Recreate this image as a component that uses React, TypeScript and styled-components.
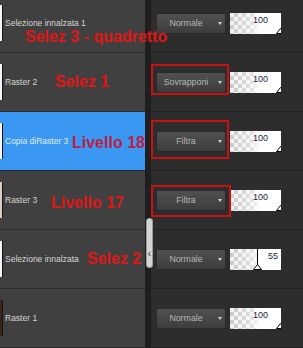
import React from 'react';
import styled, { createGlobalStyle } from 'styled-components';

type Note = { text: string; left: number; top: number };
type Mark = { top: number; height: number; width: number };

type Layer = {
  name: string;
  thumb: string;
  mode: string;
  opacity: number;
  valuePad: number;
  selected?: boolean;
  note?: Note;
  mark?: Mark;
};

const layers: Layer[] = [
  {
    name: 'Selezione innalzata 1',
    thumb: '#f4f4f4',
    mode: 'Normale',
    opacity: 100,
    valuePad: 13,
    note: { text: 'Selez 3 - quadretto', left: 25, top: 35 },
  },
  {
    name: 'Raster 2',
    thumb: '#f4f4f4',
    mode: 'Sovrapponi',
    opacity: 100,
    valuePad: 13,
    note: { text: 'Selez 1', left: 55, top: 21 },
    mark: { top: 11, height: 31, width: 78 },
  },
  {
    name: 'Copia diRaster 3',
    thumb: '#f7f7f7',
    mode: 'Filtra',
    opacity: 100,
    valuePad: 13,
    selected: true,
    note: { text: 'Livello 18', left: 72, top: 23 },
    mark: { top: 8, height: 39, width: 78 },
  },
  {
    name: 'Raster 3',
    thumb: '#d9cdc4',
    mode: 'Filtra',
    opacity: 100,
    valuePad: 13,
    note: { text: 'Livello 17', left: 51, top: 24 },
    mark: { top: 14, height: 32, width: 80 },
  },
  {
    name: 'Selezione innalzata',
    thumb: '#f4f4f4',
    mode: 'Normale',
    opacity: 55,
    valuePad: 3,
    note: { text: 'Selez 2', left: 87, top: 21 },
  },
  {
    name: 'Raster 1',
    thumb: '#3a2418',
    mode: 'Normale',
    opacity: 100,
    valuePad: 13,
  },
];

const App = () => {
  return (
    <>
      <GlobalStyle />
      <Panel>
        {layers.map((layer) => (
          <Row key={layer.name}>
            <NameCell $selected={layer.selected}>
              <Thumb $color={layer.thumb} />
              <LayerName $selected={layer.selected}>{layer.name}</LayerName>
            </NameCell>
            <Divider />
            <ModeCell>
              <Dropdown>
                <DropdownLabel>{layer.mode}</DropdownLabel>
                <Caret />
              </Dropdown>
              <Opacity>
                <OpacityFill style={{ width: `${layer.opacity}%` }} $full={layer.opacity >= 100} />
                <OpacityValue $pad={layer.valuePad}>{layer.opacity}</OpacityValue>
                <Marker style={{ left: `${layer.opacity}%` }} width="9" height="6" viewBox="0 0 9 6">
                  <path d="M0.5 5.5 L4.5 0.5 L8.5 5.5 Z" fill="#fff" stroke="#000" strokeWidth="1" />
                </Marker>
              </Opacity>
              {layer.mark && (
                <Highlight $top={layer.mark.top} $height={layer.mark.height} $width={layer.mark.width} />
              )}
            </ModeCell>
            {layer.note && (
              <Annotation $left={layer.note.left} $top={layer.note.top} $onBlue={layer.selected}>
                {layer.note.text}
              </Annotation>
            )}
          </Row>
        ))}
        <SplitHandle>‹</SplitHandle>
      </Panel>
    </>
  );
};

const GlobalStyle = createGlobalStyle`
  html, body {
    margin: 0;
    padding: 0;
    background: #2d2d2d;
    overflow: hidden;
  }
  body {
    font-family: "Liberation Sans", Arial, sans-serif;
  }
`;

const Panel = styled.div`
  position: relative;
  width: 303px;
  margin-top: -6px;
`;

const Row = styled.div`
  position: relative;
  display: grid;
  grid-template-columns: 145px 6px 1fr;
  height: 59px;
`;

const NameCell = styled.div<{ $selected?: boolean }>`
  display: flex;
  align-items: center;
  gap: 1px;
  background: ${(p) => (p.$selected ? '#3a98f3' : '#404040')};
  border-bottom: 1px solid ${(p) => (p.$selected ? '#1b2c40' : '#2a2a2a')};
  overflow: hidden;
`;

const Thumb = styled.div<{ $color: string }>`
  flex: none;
  width: 2px;
  height: 36px;
  background: ${(p) => p.$color};
  border-right: 1px solid #151515;
`;

const LayerName = styled.span<{ $selected?: boolean }>`
  font-size: 8.5px;
  color: ${(p) => (p.$selected ? '#e2ecf8' : '#d4d4d4')};
  white-space: nowrap;
  margin-left: 1px;
`;

const Divider = styled.div`
  background: #1f1f1f;
`;

const ModeCell = styled.div`
  position: relative;
  display: flex;
  align-items: center;
  gap: 4px;
  padding-left: 5px;
  background: #2d2d2d;
  border-bottom: 1px solid #222;
`;

const Dropdown = styled.div`
  box-sizing: border-box;
  display: flex;
  align-items: center;
  width: 70px;
  height: 21px;
  border: 1px solid #2a2a2a;
  border-radius: 2px;
  background: linear-gradient(#505050, #3d3d3d);
`;

const DropdownLabel = styled.span`
  width: 58px;
  text-align: center;
  font-size: 8.8px;
  color: #b6b6b6;
`;

const Caret = styled.span`
  margin-left: 3px;
  width: 0;
  height: 0;
  border-left: 2.5px solid transparent;
  border-right: 2.5px solid transparent;
  border-top: 3px solid #d0d0d0;
`;

const Opacity = styled.div`
  position: relative;
  width: 51px;
  height: 21px;
  background: #fff;
  overflow: hidden;
`;

const OpacityFill = styled.div<{ $full: boolean }>`
  position: absolute;
  left: 0;
  top: 0;
  bottom: 0;
  box-sizing: border-box;
  border-right: ${(p) => (p.$full ? 'none' : '1px solid #000')};
  background:
    linear-gradient(to right, rgba(255, 255, 255, 0) 0px, rgba(255, 255, 255, 0.45) 22px, #fff 30px),
    linear-gradient(45deg, #c9c9c9 25%, transparent 25%, transparent 75%, #c9c9c9 75%),
    linear-gradient(45deg, #c9c9c9 25%, transparent 25%, transparent 75%, #c9c9c9 75%),
    #f2f2f2;
  background-size: 100% 100%, 8px 8px, 8px 8px, auto;
  background-position: 0 0, 0 0, 4px 4px, 0 0;
`;

const OpacityValue = styled.span<{ $pad: number }>`
  position: absolute;
  top: 2px;
  right: ${(p) => p.$pad}px;
  font-size: 9px;
  line-height: 10px;
  color: #1c2438;
`;

const Marker = styled.svg`
  position: absolute;
  bottom: 0;
  margin-left: -5px;
`;

const Highlight = styled.div<{ $top: number; $height: number; $width: number }>`
  position: absolute;
  left: 0;
  top: ${(p) => p.$top}px;
  width: ${(p) => p.$width}px;
  height: ${(p) => p.$height}px;
  box-sizing: border-box;
  border: 2px solid #c81212;
  pointer-events: none;
`;

const Annotation = styled.span<{ $left: number; $top: number; $onBlue?: boolean }>`
  position: absolute;
  left: ${(p) => p.$left}px;
  top: ${(p) => p.$top}px;
  font-size: 16px;
  line-height: 16px;
  font-weight: 700;
  white-space: nowrap;
  color: ${(p) => (p.$onBlue ? '#bd1f42' : '#e01616')};
  z-index: 2;
`;

const SplitHandle = styled.div`
  position: absolute;
  left: 146px;
  top: 224px;
  box-sizing: border-box;
  width: 7px;
  height: 50px;
  display: flex;
  align-items: flex-end;
  justify-content: center;
  padding-bottom: 8px;
  border: 1px solid #9a9a9a;
  border-radius: 3px;
  background: #d4d4d4;
  color: #333;
  font-size: 10px;
  line-height: 10px;
  z-index: 3;
`;

export default App;
